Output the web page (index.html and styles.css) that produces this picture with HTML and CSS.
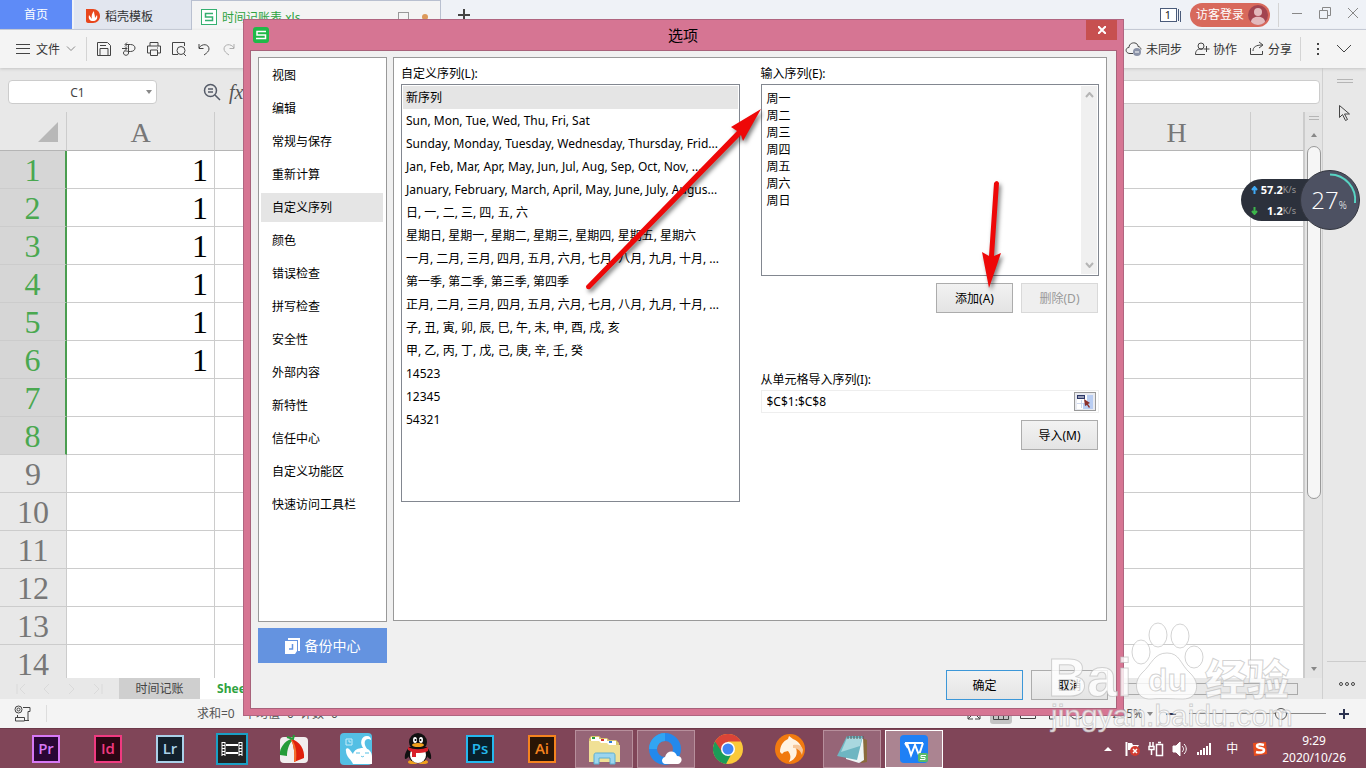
FILE: index.html
```html
<!DOCTYPE html>
<html lang="zh-CN">
<head>
  <meta charset="UTF-8">
  <meta name="viewport" content="width=device-width, initial-scale=1.0">
  <title>时间记账表.xls - 选项</title>
  <link rel="stylesheet" href="styles.css">
</head>
<body>

  <div class="app">
    <!-- 标签栏 -->
    <header class="tabbar">
      <button class="tab tab-home">首页</button>
      <button class="tab tab-docer">
        <svg width="14" height="16" viewBox="0 0 14 16"><path d="M0 1h7c4 0 7 3 7 7s-3 7-7 7H2c-1 0-2-1-2-2z" fill="#e8461c"/><path d="M7 13c-3 0-5-2-4-6l3 4c-1-3 0-6 2-8 0 3 1 4 1 7l2-3c1 4-1 6-4 6z" fill="#fff"/></svg>
        稻壳模板
      </button>
      <button class="tab tab-file">
        <svg width="16" height="16" viewBox="0 0 16 16" fill="none" stroke="#35b070"><rect x=".5" y=".5" width="15" height="15" fill="#fff"/><path d="M12 4.500H4.500V8H11.500V11.500H4" stroke-width="1.500"/></svg>
        <span class="tab-name">时间记账表.xls</span>
        <span class="tab-square"></span>
        <span class="tab-dot"></span>
      </button>
      <button class="tab-add" aria-label="新建"><svg width="14" height="14" viewBox="0 0 14 14" stroke="#444" stroke-width="2"><path d="M7 1v12M1 7h12"/></svg></button>
      <div class="window-tools">
        <svg width="22" height="14" viewBox="0 0 22 14" fill="none" stroke="#4a5b7a"><rect x=".5" y=".5" width="16" height="13" fill="#fff"/><path d="M18.500 1v12M20.500 3v11"/><text x="8" y="11" font-size="11" text-anchor="middle" fill="#222" stroke="none">1</text></svg>
        <button class="login">访客登录
          <svg width="20" height="20" viewBox="0 0 20 20"><circle cx="10" cy="10" r="10" fill="#a24450"/><circle cx="10" cy="7" r="4" fill="#e3b9bc"/><path d="M3 17c0-7 14-7 14 0-4 4-10 4-14 0z" fill="#e3b9bc"/></svg>
        </button>
        <span class="bar"></span>
        <button aria-label="最小化"><svg width="12" height="12" viewBox="0 0 12 12" stroke="#888"><path d="M1 6.500h10"/></svg></button>
        <button aria-label="还原"><svg width="12" height="12" viewBox="0 0 12 12" stroke="#888" fill="none"><path d="M.5 3.500h8v8h-8zM3.500 3V.5h8v8H9"/></svg></button>
        <button aria-label="关闭"><svg width="12" height="12" viewBox="0 0 12 12" stroke="#888"><path d="M1 1l10 10M11 1L1 11"/></svg></button>
      </div>
    </header>

    <!-- 工具栏 -->
    <div class="toolbar">
      <button class="menu-file">
        <svg width="14" height="12" viewBox="0 0 14 12" stroke="#444"><path d="M0 1.500h14M0 5.500h14M0 10.500h14"/></svg>
        文件
        <svg width="10" height="6" viewBox="0 0 10 6" stroke="#888" fill="none"><path d="M1 .5l4 4 4-4"/></svg>
      </button>
      <span class="bar"></span>
      <div class="tool-icons">
        <button aria-label="保存"><svg width="16" height="16" viewBox="0 0 16 16"><path d="M1.500 1.500h10l3 3v10h-13zM4 14V7.500h8V14M4 4.500h6"/></svg></button>
        <button aria-label="输出"><svg width="16" height="16" viewBox="0 0 16 16"><path d="M4.500 3.500h5c6 0 6 7 0 7H8M7.500 3.500v8.500c0 3-5 3-5 0s3-2 5-1.500M1 7.500h5M4 5.500l2 2-2 2M6 1.500L4 3.500l2 2"/></svg></button>
        <button aria-label="打印"><svg width="16" height="16" viewBox="0 0 16 16"><path d="M4 5V1.500h8V5M4 12H1.500V5h13v7H12M4.500 9h7v5.500h-7zM11 7h1"/></svg></button>
        <button aria-label="打印预览"><svg width="16" height="16" viewBox="0 0 16 16"><path d="M7 13.500H1.500v-12h12V5M13 13l2 2"/><circle cx="10" cy="9.500" r="4"/></svg></button>
        <button aria-label="撤销"><svg width="16" height="16" viewBox="0 0 16 16"><path d="M3 3v4.500h4.500M3 7c3-5 10-4 10 1 0 2-2 4-5 6"/></svg></button>
        <button aria-label="恢复" disabled><svg width="16" height="16" viewBox="0 0 16 16"><path d="M13 3v4.500H8.500M13 7c-3-5-10-4-10 1 0 2 2 4 5 6"/></svg></button>
      </div>
      <div class="share-tools">
        <button><svg width="18" height="16" viewBox="0 0 18 16"><path d="M8 12.500H5c-5 0-5-6-1-6 0-6 9-6 9-1 2 0 3 2 3 3"/><circle cx="12" cy="11" r="4" fill="#8b93a8" stroke="none"/><path d="M10 11h4" stroke="#fff"/></svg>未同步</button>
        <button><svg width="16" height="16" viewBox="0 0 16 16"><circle cx="7" cy="5" r="3"/><path d="M11 13.500H1.500c0-5 3-6 7-5M12.500 5v6M9.500 8h6"/></svg>协作</button>
        <button><svg width="16" height="16" viewBox="0 0 16 16"><path d="M1.500 7v6.500h12V10M4 10c0-4 3-6 9-6M10 1l4 3-4 3"/></svg>分享</button>
        <span class="bar"></span>
        <button aria-label="更多"><svg width="4" height="14" viewBox="0 0 4 14"><path d="M2 1v2M2 6v2M2 11v2" stroke-width="2"/></svg></button>
        <button class="collapse" aria-label="收起"><svg width="16" height="10" viewBox="0 0 16 10"><path d="M1 1l7 7 7-7"/></svg></button>
      </div>
    </div>

    <div class="workspace">
      <main class="editor">
        <div class="formula-bar">
          <div class="name-box"><input type="text" value="C1" aria-label="名称框"><span class="caret-down"></span></div>
          <svg width="18" height="18" viewBox="0 0 18 18" fill="none" stroke="#555b68" stroke-width="1.500"><circle cx="7.500" cy="7.500" r="6"/><path d="M12 12l5 5M5 6h5M5 9h5"/></svg>
          <span class="fx">fx</span>
          <input class="formula" type="text" aria-label="编辑栏">
        </div>
        <div class="sheet-area">
          <div class="sheet">
            <table>
              <thead>
                <tr><th class="corner"><span></span></th><th>A</th><th>B</th><th>C</th><th>D</th><th>E</th><th>F</th><th>G</th><th>H</th><th class="last"></th></tr>
              </thead>
              <tbody id="rows"></tbody>
            </table>
          </div>
          <div class="scroll-y">
            <span class="split"></span>
            <span class="arrow-up"></span>
            <span class="thumb"></span>
            <span class="arrow-down"></span>
          </div>
        </div>
        <div class="sheet-tabs">
          <span class="sheet-nav">
            <svg width="90" height="14" viewBox="0 0 90 14" fill="none" stroke="#dadada"><path d="M1 2v10M9 2L4 7l5 5M33 2l-5 5 5 5M53 2l5 5-5 5M78 2l5 5-5 5M86 2v10"/></svg>
          </span>
          <button class="sheet-tab">时间记账</button>
          <button class="sheet-tab active">Sheet1</button>
          <span class="scroll-x"><span></span></span>
        </div>
      </main>
      <aside class="side">
        <span class="split"></span>
        <svg width="14" height="18" viewBox="0 0 14 18" fill="none" stroke="#444"><path d="M1.500 1.500v12l3-3 3 6 2-1-3-5.500h5z"/></svg>
        <button class="side-more" aria-label="更多"><svg width="16" height="6" viewBox="0 0 16 6" fill="none" stroke="#444"><circle cx="2" cy="3" r="1.500"/><circle cx="8" cy="3" r="1.500"/><circle cx="14" cy="3" r="1.500"/></svg></button>
      </aside>
    </div>

    <!-- 状态栏 -->
    <div class="statusbar">
      <svg class="stamp" width="18" height="18" viewBox="0 0 18 18" fill="none" stroke="#444"><circle cx="4.500" cy="4.500" r="3.500"/><circle cx="4.500" cy="4.500" r="1.500"/><path d="M9 2.500h7v4h-2v9M3.500 10v2M1.500 12.500h9v3.500h-9zM11 15.500h4"/></svg>
      <span class="stats">求和=0&nbsp;&nbsp; 平均值=0&nbsp;&nbsp;计数=0</span>
      <div class="views">
        <svg width="16" height="16" viewBox="0 0 16 16"><path d="M2 8v5h5M2 13l4-4M14 8v5H9M14 13l-4-4"/></svg>
        <svg class="on" width="22" height="20" viewBox="0 0 22 20"><path d="M3.500 6.500h15v9h-15zM3 11.500h16M8.500 6v9M13.500 6v9"/></svg>
        <svg width="16" height="16" viewBox="0 0 16 16"><path d="M.5 3.500h15v9H.5z"/></svg>
        <svg width="16" height="16" viewBox="0 0 16 16"><path d="M2 7.500h12M5.500 8v5h5V8"/></svg>
        <svg width="18" height="16" viewBox="0 0 18 16"><ellipse cx="9" cy="8" rx="7" ry="5"/><circle cx="9" cy="8" r="2"/></svg>
      </div>
      <span class="zoom-value">205%</span><span class="caret-down"></span>
      <button class="zoom-btn" aria-label="缩小"><svg width="12" height="12" viewBox="0 0 12 12"><path d="M1 6h10"/></svg></button>
      <span class="zoom-track"><span></span></span>
      <button class="zoom-btn" aria-label="放大"><svg width="12" height="12" viewBox="0 0 12 12"><path d="M1 6h10M6 1v10"/></svg></button>
    </div>
  </div>

  <!-- 任务栏 -->
  <footer class="taskbar">
    <button class="task"><span class="adobe pr">Pr</span></button>
    <button class="task"><span class="adobe id">Id</span></button>
    <button class="task"><span class="adobe lr">Lr</span></button>
    <button class="task" aria-label="视频"><svg width="32" height="32" viewBox="0 0 32 32"><rect x="1" y="1" width="30" height="30" fill="#222" stroke="#1a9fc4" stroke-width="2"/><path d="M7.500 9v14M24.500 9v14" stroke="#fff" stroke-width="4"/><path d="M7.500 10v13M24.500 10v13" stroke="#222" stroke-width="2" stroke-dasharray="2 1"/><path d="M10 12h12M10 20h12" stroke="#fff" stroke-width="2"/></svg></button>
    <button class="task" aria-label="录屏"><svg width="32" height="32" viewBox="0 0 32 32"><rect x="2" y="4" width="28" height="26" rx="4" fill="#f1eeee"/><path d="M13 6C7 8 1 15 2 22l7 1c0-6 2-12 5-15z" fill="#259c38"/><path d="M13 6c9 2 14 11 13 19l-10 4c1-8 0-16-3-23z" fill="#e0200c"/><path d="M13 6c5 5 6 13 5 22l-2 1c1-8 0-16-3-23z" fill="#f4712c"/><path d="M9 4l6 2 1-4" stroke="#259c38" stroke-width="2" fill="none"/></svg></button>
    <button class="task" aria-label="宠物"><svg width="32" height="32" viewBox="0 0 32 32"><rect width="32" height="32" rx="4" fill="#54bfe4"/><path d="M13 31c-2-5-7-7-7-13-1-3 2-4 4-1l3 4c1-4 5-6 10-6 6 0 9 4 9 9v7z" fill="#fff"/><path d="M24 16c-5-5-3-13 3-13 3 0 4 2 4 4-5-3-9 2-4 9z" fill="#fff"/><path d="M16 20h4M25 20h4M21 23c1 1 2 1 3 0" stroke="#54bfe4" fill="none"/><path d="M6 6h6v6H6zM8 8h2v2" stroke="#c6ecf9" fill="none"/></svg></button>
    <button class="task" aria-label="QQ"><svg width="32" height="32" viewBox="0 0 32 32"><ellipse cx="11" cy="29" rx="5" ry="2" fill="#f0a01c"/><ellipse cx="21" cy="29" rx="5" ry="2" fill="#f0a01c"/><path d="M7 14c-2 3-5 7-4 12 2 0 3-2 4-3h18c1 1 2 3 4 3 1-5-2-9-4-12z" fill="#111"/><ellipse cx="16" cy="21" rx="10" ry="9" fill="#111"/><ellipse cx="16" cy="22" rx="8" ry="8" fill="#fff"/><ellipse cx="16" cy="9" rx="9" ry="9" fill="#111"/><ellipse cx="13" cy="7" rx="2" ry="3" fill="#fff"/><ellipse cx="19" cy="7" rx="2" ry="3" fill="#fff"/><circle cx="13.500" cy="7" r="1"/><circle cx="18.500" cy="7" r="1"/><ellipse cx="16" cy="12" rx="6" ry="2" fill="#f0a01c"/><path d="M6 14c6 3 14 3 20 0v4c-4 2-8 2-12 2v4h-4v-5l-4-2z" fill="#d8202a"/></svg></button>
    <button class="task"><span class="adobe ps">Ps</span></button>
    <button class="task"><span class="adobe ai">Ai</span></button>
    <button class="task open" aria-label="文件资源管理器"><svg width="34" height="32" viewBox="0 0 34 32"><path d="M2 6l2-3h8l2 2h6l2 2h7l3 3v18H2z" fill="#d9c56c"/><path d="M4 4h8v4H4zM12 6h8v4h-8zM20 8h9v4h-9z" fill="#fff"/><path d="M5 4h3v2H5z" fill="#2a9c3a"/><path d="M14 6h3v2h-3z" fill="#d8352a"/><path d="M22 8h3v2h-3z" fill="#2a7cd8"/><path d="M2 8h10l2 2h6l2 2h11v17H2z" fill="#f0e095"/><path d="M7 31v-8c0-3 1-3 3-3h15c2 0 3 0 3 3v8h-5v-6H12v6z" fill="#9bd5ee" stroke="#5baed2"/></svg></button>
    <button class="task open" aria-label="QQ浏览器"><svg width="34" height="32" viewBox="0 0 34 32"><circle cx="16" cy="16" r="12" fill="none" stroke="#2389ec" stroke-width="8"/><path d="M4 16A12 12 0 0 1 16 4" fill="none" stroke="#31a5f2" stroke-width="8"/><path d="M16 31c-4-1-4-6 0-7 2-7 10-7 12-1 6 0 6 7 1 8z" fill="#fff"/></svg></button>
    <button class="task" aria-label="Chrome"><svg width="30" height="30" viewBox="0 0 30 30"><circle cx="15" cy="15" r="15" fill="#fbc93a"/><path d="M15 15L2 7.500A15 15 0 0 0 13 30l6-11z" fill="#1b9c58"/><path d="M2 7.500A15 15 0 0 1 28 7.500H15L9 18z" fill="#db4437"/><circle cx="15" cy="15" r="7" fill="#fff"/><circle cx="15" cy="15" r="5.500" fill="#4285f4"/></svg></button>
    <button class="task" aria-label="浏览器"><svg width="30" height="30" viewBox="0 0 30 30"><circle cx="15" cy="15" r="15" fill="#f07a10"/><path d="M5 18c0-6 3-11 8-13l1-3 4 3c6 2 10 8 9 14-1-3-3-5-6-5 2 6 0 11-7 14 2-4 2-7-1-11l-4 1-2 2z" fill="#fff3e2"/><path d="M18 11c5-1 9 0 10 5l-1 5c-2-5-5-7-9-7z" fill="#f6c79a"/></svg></button>
    <button class="task open" aria-label="记事本"><svg width="32" height="30" viewBox="0 0 32 30"><path d="M26 4l5 2v22l-6 1z" fill="#8a6a3c"/><path d="M12 3h15l1 23-5 3-13-4z" fill="#eef5f5"/><path d="M11 2h16l-6 24L1 22z" fill="#6eb6c2"/><path d="M11 4h15l-2 8L5 18z" fill="#a9d8df"/><path d="M12 2v3M15 2v3M18 2v3M21 2v3M24 2v3M27 2v3" stroke="#555"/></svg></button>
    <button class="task open current" aria-label="WPS"><svg width="28" height="28" viewBox="0 0 28 28"><rect width="28" height="28" rx="4" fill="#1f80f5"/><path d="M5 8h18M7 8l4 12 4-10 4 10 4-12M5 8l3 5" fill="none" stroke="#fff" stroke-width="2"/><rect x="18" y="18" width="10" height="9" rx="2" fill="#58ba68"/><path d="M26 20.500h-5v2h4v2h-5" fill="none" stroke="#fff"/></svg></button>
    <div class="tray">
      <span class="tray-up"></span>
      <svg width="16" height="16" viewBox="0 0 16 16"><path d="M2.500 1v14" stroke="#fff" stroke-width="2"/><path d="M4 2h4l1 2h6l-2 3 1 2H4z" fill="#fff"/><circle cx="11" cy="10" r="5" fill="#d13b30"/><path d="M9 8l4 4M13 8l-4 4" stroke="#fff" stroke-width="1.500"/></svg>
      <svg width="16" height="16" viewBox="0 0 16 16" fill="none" stroke="#fff"><path d="M2 1v4M5 1v4M1 5.500h5v3H1zM3.500 9v5M8.500 3.500h6v11h-6zM10 1.500h3" stroke-width="1.500"/></svg>
      <svg width="16" height="16" viewBox="0 0 16 16" fill="none" stroke="#fff"><path d="M1 5h3l4-4v14l-4-4H1z" fill="#fff"/><path d="M10 5c2 2 2 4 0 6M12 3c3 3 3 7 0 10"/></svg>
      <svg width="16" height="16" viewBox="0 0 16 16" stroke="#fff" stroke-width="2"><path d="M2 14v-3M5 14V9M8 14V7M11 14V5M14 14V2"/></svg>
      <span class="ime">中</span>
      <svg width="16" height="16" viewBox="0 0 16 16"><path d="M1 2l13-1 1 12-13 2z" fill="#ea4c1c"/><path d="M12 4c-4-1-7-1-7 1 0 3 7 1 7 4 0 3-5 3-8 2" stroke="#fff" stroke-width="2.500" fill="none"/></svg>
      <div class="clock"><div>9:29</div><div>2020/10/26</div></div>
    </div>
  </footer>

  <!-- 选项对话框 -->
  <section class="dialog" role="dialog" aria-label="选项">
    <div class="dialog-title">
      <svg width="16" height="16" viewBox="0 0 16 16"><rect width="16" height="16" rx="3" fill="#1fba48"/><path d="M13 4.500H4V8h8.500v3.500H3" fill="none" stroke="#fff" stroke-width="1.500"/></svg>
      <span>选项</span>
      <button class="close" aria-label="关闭"><svg width="8" height="8" viewBox="0 0 8 8" stroke="#fff" stroke-width="2"><path d="M0 0l8 8M8 0L0 8"/></svg></button>
    </div>
    <div class="dialog-body">
      <div class="dialog-main">
        <div class="dialog-left">
          <nav class="categories">
            <button>视图</button>
            <button>编辑</button>
            <button>常规与保存</button>
            <button>重新计算</button>
            <button class="selected">自定义序列</button>
            <button>颜色</button>
            <button>错误检查</button>
            <button>拼写检查</button>
            <button>安全性</button>
            <button>外部内容</button>
            <button>新特性</button>
            <button>信任中心</button>
            <button>自定义功能区</button>
            <button>快速访问工具栏</button>
          </nav>
          <button class="backup">
            <svg width="16" height="16" viewBox="0 0 16 16"><path d="M3 0h12v13h-2V2H3z" fill="#fff"/><path d="M0 3h12v10l-2 3H0z" fill="#fff"/><path d="M7.500 6v5H4" stroke="#6493e0" stroke-width="1.500" fill="none"/></svg>
            备份中心
          </button>
        </div>
        <div class="panel">
          <div class="panel-lists">
            <div class="label" id="listLabel">自定义序列(L):</div>
            <ul class="listbox" role="listbox" aria-labelledby="listLabel">
              <li role="option" class="selected" aria-selected="true">新序列</li>
              <li role="option">Sun, Mon, Tue, Wed, Thu, Fri, Sat</li>
              <li role="option">Sunday, Monday, Tuesday, Wednesday, Thursday, Frid...</li>
              <li role="option">Jan, Feb, Mar, Apr, May, Jun, Jul, Aug, Sep, Oct, Nov, ...</li>
              <li role="option">January, February, March, April, May, June, July, Augus...</li>
              <li role="option">日, 一, 二, 三, 四, 五, 六</li>
              <li role="option">星期日, 星期一, 星期二, 星期三, 星期四, 星期五, 星期六</li>
              <li role="option">一月, 二月, 三月, 四月, 五月, 六月, 七月, 八月, 九月, 十月, ...</li>
              <li role="option">第一季, 第二季, 第三季, 第四季</li>
              <li role="option">正月, 二月, 三月, 四月, 五月, 六月, 七月, 八月, 九月, 十月, ...</li>
              <li role="option">子, 丑, 寅, 卯, 辰, 巳, 午, 未, 申, 酉, 戌, 亥</li>
              <li role="option">甲, 乙, 丙, 丁, 戊, 己, 庚, 辛, 壬, 癸</li>
              <li role="option">14523</li>
              <li role="option">12345</li>
              <li role="option">54321</li>
            </ul>
          </div>
          <div class="panel-input">
            <label class="label" for="entries">输入序列(E):</label>
            <div class="entries">
              <textarea id="entries">周一
周二
周三
周四
周五
周六
周日</textarea>
              <div class="entries-scroll">
                <svg width="9" height="6" viewBox="0 0 9 6"><path d="M1 5l3.500-4L8 5"/></svg>
                <svg width="9" height="6" viewBox="0 0 9 6"><path d="M1 1l3.500 4L8 1"/></svg>
              </div>
            </div>
            <div class="actions">
              <button class="btn">添加(A)</button>
              <button class="btn" disabled>删除(D)</button>
            </div>
            <label class="label import-label" for="range">从单元格导入序列(I):</label>
            <div class="range">
              <input type="text" id="range" value="$C$1:$C$8">
              <button aria-label="选择区域"><svg width="16" height="14" viewBox="0 0 16 14"><rect width="16" height="14" fill="#fff"/><path d="M0 0h8v4H0z" fill="#2c3768"/><path d="M1 2h6" stroke="#fff"/><path d="M10 0h6v14H6V8h4z" fill="#b9cdf2"/><path d="M0 8.500h6M4.500 5v8" stroke="#cdd8ee"/><path d="M7 4l6 4-2 1 2 3-1 1-2-3-2 1z" fill="#8a2f2a"/></svg></button>
            </div>
            <div class="actions">
              <button class="btn">导入(M)</button>
            </div>
          </div>
        </div>
      </div>
      <div class="dialog-footer">
        <button class="btn btn-ok">确定</button>
        <button class="btn">取消</button>
      </div>
    </div>
  </section>

  <!-- 红色箭头标注 -->
  <svg class="arrows" width="480" height="220" viewBox="0 0 480 220">
    <g fill="#ee0808">
      <path d="M9 196L160 41l-6-4 30-18-18 32-2-6L13 199q-4 1-4-3z"/>
      <path d="M417 93l-5 73-7-4 7 36 12-35-7 3 5-73q-2-4-5 0z"/>
    </g>
  </svg>

  <!-- 网速悬浮球 -->
  <div class="speed">
    <div class="speed-rates">
      <div><svg width="7" height="8" viewBox="0 0 7 8" stroke="#3fa9f5"><path d="M3.500 8V1M1 4l2.500-3L6 4"/></svg><b>57.2</b><small>K/s</small></div>
      <div><svg width="7" height="8" viewBox="0 0 7 8" stroke="#3cb54a"><path d="M3.500 0v7M1 4l2.500 3L6 4"/></svg><b>1.2</b><small>K/s</small></div>
    </div>
    <div class="speed-ball">27<small>%</small>
      <svg width="60" height="60" viewBox="0 0 60 60"><path d="M30 4.500A25.500 25.500 0 0 1 55 33" fill="none" stroke="#58d5c4" stroke-width="2"/></svg>
    </div>
  </div>

  <!-- 水印 -->
  <svg class="watermark" width="260" height="125" viewBox="0 0 260 125">
    <g fill="#fff" fill-opacity=".8" stroke="#b5b5b5" stroke-opacity=".6">
      <ellipse cx="95" cy="37" rx="9" ry="12"/>
      <ellipse cx="112" cy="20" rx="9" ry="12"/>
      <ellipse cx="134" cy="21" rx="9" ry="12"/>
      <ellipse cx="148" cy="42" rx="9" ry="11"/>
      <path d="M121 38c13 0 13 11 23 20 11 10 8 26-7 26-10 0-22-1-32 0-15 1-19-16-9-26 10-9 12-20 25-20z"/>
      <text x="2" y="81" class="wm-brand">Bai</text>
      <text x="102" y="76" class="wm-du">du</text>
      <text x="159" y="80" class="wm-cn">经验</text>
      <text x="5" y="111" class="wm-url">jingyan.baidu.com</text>
    </g>
  </svg>

  <script>
    // 生成表格行：A 列前 6 行为 1，前 8 行处于选中状态
    const rows = document.getElementById("rows");
    for (let i = 1; i <= 14; i++) {
      const tr = document.createElement("tr");
      if (i <= 8) tr.className = "picked";
      tr.innerHTML = "<th>" + i + "</th><td>" + (i <= 6 ? "1" : "") + "</td>" + "<td></td>".repeat(8);
      rows.appendChild(tr);
    }
  </script>
</body>
</html>
```

FILE: styles.css
```css
* {
  box-sizing: border-box;
}
body {
  margin: 0;
  height: 100vh;
  display: flex;
  flex-direction: column;
  overflow: hidden;
  position: relative;
  font-family: "Noto Sans", "Noto Sans CJK SC", sans-serif;
  font-size: 12px;
  line-height: 17px;
  color: #000;
}
button, input, textarea {
  font: inherit;
  color: inherit;
  border: 0;
  margin: 0;
  padding: 0;
  background: none;
}
svg {
  flex: none;
}
.app {
  flex: 1;
  min-height: 0;
  display: flex;
  flex-direction: column;
  background: #e8e8e8;
}
.bar {
  width: 1px;
  height: 24px;
  background: #d4d4d4;
}

/* 标签栏 */
.tabbar {
  height: 30px;
  display: flex;
  background: #eff2f7;
  border-bottom: 1px solid #c5cbd8;
}
.tab {
  display: flex;
  align-items: center;
  gap: 5px;
  color: #333;
}
.tab-home {
  width: 72px;
  justify-content: center;
  background: #5e8bf7;
  color: #fff;
}
.tab-docer {
  width: 117px;
  margin-left: 2px;
  padding: 3px 0 0 12px;
  background: #e2e6ef;
}
.tab-file {
  width: 250px;
  height: 30px;
  padding: 3px 12px 0 9px;
  background: #f4f4f4;
  border: 1px solid #b9c0d0;
  border-bottom: 0;
  color: #2fa341;
}
.tab-name {
  margin-right: auto;
}
.tab-square {
  width: 11px;
  height: 11px;
  border: 1px solid #999;
}
.tab-dot {
  width: 6px;
  height: 6px;
  margin-left: 8px;
  border-radius: 50%;
  background: #dd9a5a;
}
.tab-add {
  padding: 5px 0 0 16px;
}
.window-tools {
  margin-left: auto;
  padding-right: 7px;
  display: flex;
  align-items: center;
  gap: 16px;
}
.window-tools .bar {
  margin-right: -4px;
}
.login {
  height: 24px;
  margin: 0 -8px;
  padding: 0 2px 0 6px;
  display: flex;
  align-items: center;
  gap: 4px;
  border-radius: 12px;
  background: #d8695c;
  color: #fff;
}

/* 工具栏 */
.toolbar {
  height: 38px;
  display: flex;
  align-items: center;
  background: #f4f4f4;
  box-shadow: 0 1px 3px #c4c4c4;
  z-index: 1;
  color: #333;
}
.menu-file {
  display: flex;
  align-items: center;
  gap: 6px;
  padding: 0 10px 0 16px;
}
.tool-icons {
  display: flex;
  gap: 9px;
  padding-left: 9px;
}
.toolbar button svg {
  display: block;
}
.tool-icons svg, .share-tools svg {
  fill: none;
  stroke: #444;
}
.tool-icons button:disabled {
  opacity: 0.4;
}
.share-tools {
  margin-left: auto;
  padding-right: 14px;
  display: flex;
  align-items: center;
  gap: 12px;
}
.share-tools button {
  display: flex;
  align-items: center;
  gap: 3px;
}
.share-tools .bar {
  margin: 0 3px 0 -4px;
}
.share-tools .collapse {
  margin-left: 4px;
}

/* 工作区 */
.workspace {
  flex: 1;
  min-height: 0;
  display: flex;
}
.editor {
  flex: 1;
  min-width: 0;
  display: flex;
  flex-direction: column;
}
.formula-bar {
  height: 44px;
  padding: 12px 2px 8px 8px;
  flex: none;
  display: flex;
  align-items: center;
}
.name-box {
  width: 149px;
  height: 24px;
  margin-right: 46px;
  padding: 0 4px 0 0;
  display: flex;
  align-items: center;
  background: #fff;
  border: 1px solid #ccc;
  border-radius: 4px;
}
.name-box input {
  flex: 1;
  min-width: 0;
  text-align: center;
  color: #444;
}
.caret-down {
  border: 3px solid transparent;
  border-top: 4px solid #888;
  border-bottom: 0;
}
.fx {
  width: 30px;
  padding-left: 8px;
  font: italic 20px/24px "Liberation Serif", serif;
  color: #555;
}
.formula {
  flex: 1;
  height: 24px;
  background: #fff;
  border: 1px solid #ccc;
  border-radius: 4px;
}
.sheet-area {
  flex: 1;
  min-height: 0;
  display: flex;
}
.sheet {
  flex: 1;
  min-width: 0;
  overflow: hidden;
  background: #fff;
  border-right: 1px solid #ccc;
}
.sheet table {
  width: 100%;
  table-layout: fixed;
  border-collapse: separate;
  border-spacing: 0;
  font-family: "Liberation Serif", serif;
  font-size: 32px;
  line-height: 35px;
}
.sheet th, .sheet td {
  width: 148px;
  height: 38px;
  padding: 2px 6px 0 0;
  border-right: 1px solid #ccc;
  border-bottom: 1px solid #ccc;
  text-align: right;
}
.sheet th {
  padding: 2px 0 0;
  background: #e8e8e8;
  text-align: center;
  font-weight: normal;
  color: #777;
}
.sheet thead th {
  height: 39px;
  font-size: 28px;
  border-bottom-color: #b5b5b5;
}
.sheet .corner {
  width: 67px;
}
.corner span {
  display: block;
  width: 20px;
  height: 20px;
  margin: 0 8px 0 auto;
  background: #b8b8b8;
  clip-path: polygon(100% 0, 100% 100%, 0 100%);
}
.sheet .last {
  width: auto;
}
.sheet .picked th {
  background: #d6d6d6;
  border-right: 2px solid #4a9d50;
  color: #4aa850;
}
.scroll-y {
  width: 17px;
  padding: 4px 1px 0 2px;
  display: flex;
  flex-direction: column;
  align-items: center;
  background: #e4e4e4;
}
.split {
  width: 10px;
  height: 4px;
  border: 1px solid #b5b5b5;
  border-width: 1px 0;
}
.arrow-up {
  margin-top: 13px;
  border: 3px solid transparent;
  border-bottom: 4px solid #888;
  border-top: 0;
}
.thumb {
  flex: 1;
  width: 14px;
  margin: 9px 0 168px;
  border: 1px solid #999;
  border-radius: 7px;
  background: #f6f6f6;
}
.arrow-down {
  margin-bottom: 7px;
  border: 3px solid transparent;
  border-top: 4px solid #888;
  border-bottom: 0;
}
.sheet-tabs {
  height: 21px;
  flex: none;
  display: flex;
  align-items: center;
}
.sheet-nav {
  width: 119px;
  padding: 4px 0 0 16px;
}
.sheet-tab {
  width: 81px;
  height: 21px;
  background: #cfcfcf;
  color: #444;
}
.sheet-tab.active {
  width: 75px;
  background: #fff;
  color: #2fa341;
  font-weight: bold;
}
.scroll-x {
  flex: 1;
  padding-right: 24px;
}
.scroll-x span {
  display: block;
  height: 12px;
  border: 1px solid #aaa;
  border-width: 1px 1px 1px 0;
}
.side {
  width: 44px;
  padding-top: 11px;
  display: flex;
  flex-direction: column;
  align-items: center;
  gap: 21px;
  border-left: 1px solid #d0d0d0;
}
.side .split {
  width: 16px;
}
.side-more {
  align-self: stretch;
  margin: auto 0 0 4px;
  padding: 12px 0 8px;
  border-top: 1px solid #ccc;
}

/* 状态栏 */
.statusbar {
  height: 29px;
  flex: none;
  display: flex;
  align-items: center;
  padding: 0 16px 0 14px;
  background: #f4f4f4;
  color: #555;
}
.stamp {
  margin-right: 14px;
}
.stats {
  flex: 1;
  padding-left: 150px;
  border-left: 1px solid #ddd;
}
.views {
  display: flex;
  align-items: center;
  gap: 8px;
  margin-right: 26px;
}
.views svg {
  fill: none;
  stroke: #444;
}
.views .on {
  background: #c4c4c4;
  border-radius: 3px;
}
.zoom-value {
  margin-right: 4px;
}
.zoom-btn {
  height: 12px;
  line-height: 0;
  margin: 0 12px;
}
.zoom-btn:last-child {
  margin: 0 0 0 12px;
}
.zoom-btn svg {
  stroke: #2c3350;
  stroke-width: 2;
}
.zoom-track {
  width: 137px;
  height: 1px;
  display: flex;
  align-items: center;
  background: #888;
}
.zoom-track span {
  width: 12px;
  height: 12px;
  margin-left: 86px;
  border: 1px solid #555;
  border-radius: 50%;
  background: #f4f4f4;
}

/* 任务栏 */
.taskbar {
  height: 40px;
  flex: none;
  display: flex;
  align-items: center;
  gap: 4px;
  padding-left: 17px;
  background: #804558;
  border-top: 1px solid #6d3a4a;
}
.task {
  width: 58px;
  height: 38px;
  display: flex;
  align-items: center;
  justify-content: center;
}
.task.open {
  background: #966577;
  border: 1px solid #b78f9c;
}
.task.current {
  background: #ab8491;
  border-color: #fff;
}
.adobe {
  width: 28px;
  height: 28px;
  border: 2px solid;
  font: 600 15px/22px "Open Sans", sans-serif;
}
.pr {
  color: #d678f5;
  background: #2a0634;
}
.id {
  color: #f03a80;
  background: #2c0614;
}
.lr {
  color: #aad0e8;
  background: #12202c;
}
.ps {
  color: #25b8ee;
  background: #08202c;
}
.ai {
  color: #f5831f;
  background: #2a1505;
}
.tray {
  margin-left: auto;
  padding-right: 20px;
  display: flex;
  align-items: center;
  gap: 8px;
  color: #fff;
}
.tray-up {
  margin-right: 4px;
  border: 4px solid transparent;
  border-bottom: 4px solid #fff;
  border-top: 0;
}
.ime {
  margin: 0 6px;
}
.clock {
  margin-left: 6px;
  text-align: center;
}

/* 对话框 */
.dialog {
  position: absolute;
  top: 19px;
  right: 242px;
  bottom: 52px;
  left: 243px;
  z-index: 2;
  display: flex;
  flex-direction: column;
  padding: 0 6px 6px;
  background: #d67593;
  border: 1px solid #b06580;
}
.dialog-title {
  height: 30px;
  flex: none;
  display: flex;
  align-items: center;
  padding-left: 3px;
  font-size: 15px;
}
.dialog-title span {
  flex: 1;
  text-align: center;
  padding-left: 11px;
}
.close {
  width: 31px;
  height: 20px;
  align-self: flex-start;
  line-height: 0;
  background: #c75050;
}
.dialog-body {
  flex: 1;
  min-height: 0;
  display: flex;
  flex-direction: column;
  padding: 6px 8px 8px 7px;
  background: #f0f0f0;
  border: 1px solid #a8627a;
}
.dialog-main {
  flex: 1;
  min-height: 0;
  display: flex;
  gap: 6px;
  padding-right: 1px;
}
.dialog-left {
  width: 129px;
  display: flex;
  flex-direction: column;
  gap: 6px;
}
.categories {
  flex: 1;
  display: flex;
  flex-direction: column;
  gap: 4px;
  padding: 3px 3px 0 2px;
  background: #fff;
  border: 1px solid #999;
}
.categories button {
  height: 29px;
  padding-left: 11px;
  text-align: left;
}
.categories .selected, .listbox .selected {
  background: #e5e5e5;
}
.backup {
  height: 35px;
  display: flex;
  align-items: center;
  justify-content: center;
  gap: 4px;
  background: #6493e0;
  color: #fff;
  font-size: 14px;
}
.panel {
  flex: 1;
  min-width: 0;
  display: flex;
  align-items: flex-start;
  gap: 21px;
  margin-bottom: 42px;
  padding: 7px;
  background: #fff;
  border: 1px solid #999;
}
.panel-lists, .panel-input {
  flex: 1;
  min-width: 0;
  display: flex;
  flex-direction: column;
}
.label {
  height: 19px;
}
.listbox {
  height: 418px;
  margin: 0;
  padding: 1px;
  list-style: none;
  border: 1px solid #828790;
}
.listbox li {
  height: 23px;
  padding: 0 3px;
  line-height: 23px;
  white-space: nowrap;
  overflow: hidden;
  text-overflow: ellipsis;
}
.entries {
  height: 192px;
  display: flex;
  padding: 1px;
  border: 1px solid #828790;
}
.entries textarea {
  flex: 1;
  min-width: 0;
  padding: 4px;
  resize: none;
  overflow: hidden;
}
.entries-scroll {
  width: 16px;
  padding: 6px 0;
  display: flex;
  flex-direction: column;
  align-items: center;
  justify-content: space-between;
  background: #f0f0f0;
}
.entries-scroll svg {
  fill: none;
  stroke: #b5b5b5;
  stroke-width: 2;
}
.actions, .dialog-footer {
  display: flex;
  justify-content: flex-end;
  gap: 8px;
  padding-top: 7px;
}
.actions {
  padding-right: 1px;
}
.btn {
  width: 77px;
  height: 30px;
  background: linear-gradient(#f2f2f2, #e4e4e4);
  border: 1px solid #acacac;
}
.btn:disabled {
  background: #efefef;
  border-color: #d9d9d9;
  color: #999;
}
.btn-ok {
  border-color: #3c97d8;
}
.import-label {
  margin-top: 58px;
}
.range {
  height: 23px;
  padding: 1px 2px;
  display: flex;
  border: 1px solid #eee;
}
.range input {
  flex: 1;
  min-width: 0;
  padding-left: 3px;
}
.range button {
  width: 22px;
  line-height: 0;
  background: #e8eaf0;
  border: 1px solid #999;
}

/* 悬浮内容 */
.arrows {
  position: absolute;
  top: 90px;
  left: 577px;
  z-index: 3;
  filter: drop-shadow(2px 3px 2px rgba(0, 0, 0, 0.5));
}
.speed {
  position: absolute;
  top: 170px;
  right: 6px;
  z-index: 3;
  display: flex;
  align-items: center;
  color: #fff;
}
.speed-rates {
  width: 79px;
  height: 42px;
  margin-right: -20px;
  padding: 0 24px 0 10px;
  border-radius: 21px 0 0 21px;
  background: #2c313c;
  font-size: 11px;
  line-height: 21px;
}
.speed-rates div {
  display: flex;
  align-items: center;
}
.speed-rates svg {
  fill: none;
  stroke-width: 2;
}
.speed-rates b {
  margin-left: auto;
}
.speed-rates small {
  font-size: 9px;
  color: #999;
}
.speed-ball {
  position: relative;
  width: 60px;
  height: 60px;
  padding-right: 2px;
  border: 1px solid #33363f;
  border-radius: 50%;
  background: #4d5162;
  text-align: center;
  font: 300 24px/58px "Open Sans", sans-serif;
}
.speed-ball small {
  font-size: 10px;
}
.speed-ball svg {
  position: absolute;
  top: -1px;
  left: -1px;
}
.watermark {
  position: absolute;
  right: 60px;
  bottom: 28px;
  z-index: 4;
}
.wm-brand {
  font: bold 54px "Liberation Sans", sans-serif;
}
.wm-du {
  font: bold 32px "Liberation Sans", sans-serif;
}
.wm-cn {
  font: 900 42px "Noto Sans CJK SC", sans-serif;
}
.wm-url {
  font: 30px "Liberation Sans", sans-serif;
}
```
